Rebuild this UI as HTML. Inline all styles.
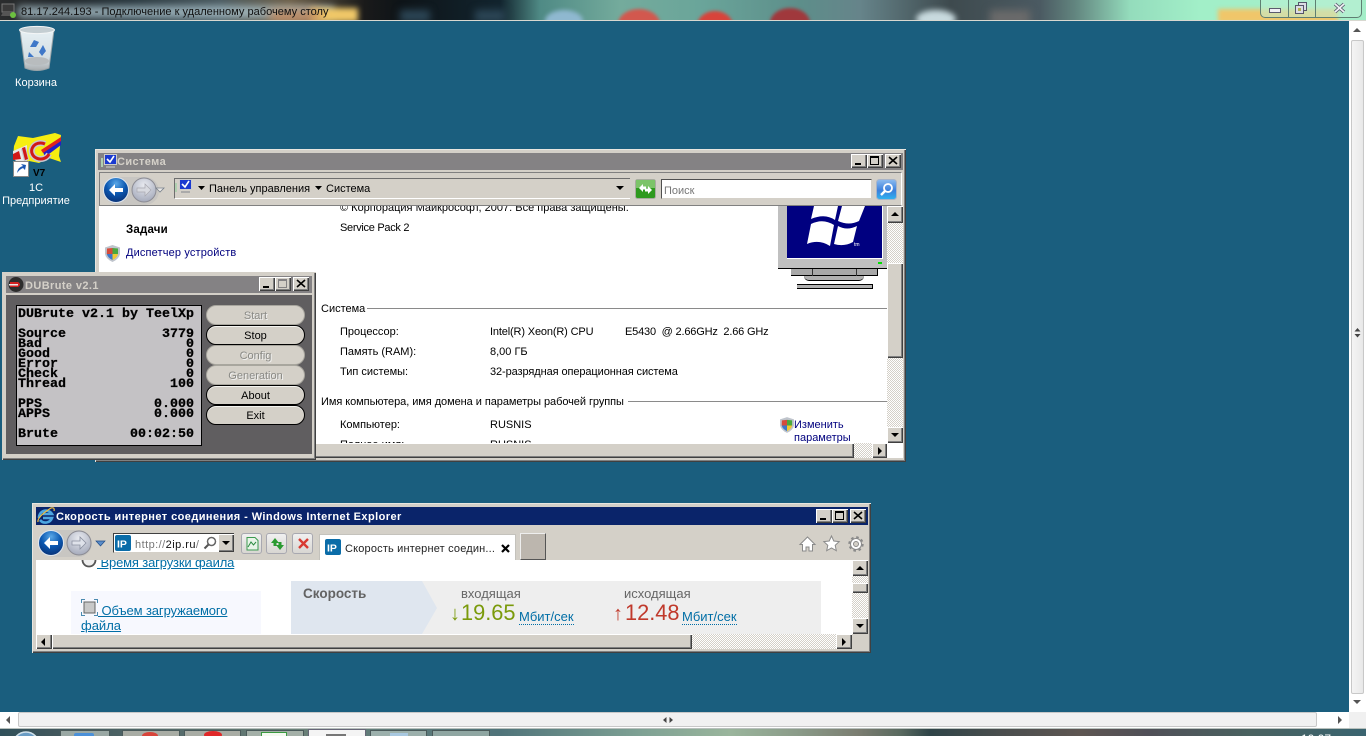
<!DOCTYPE html>
<html lang="ru"><head><meta charset="utf-8"><title>Remote desktop</title>
<style>
html,body{margin:0;padding:0;width:1366px;height:736px;overflow:hidden;background:#1a5e7e}
*{box-sizing:border-box}
body{font-family:"Liberation Sans","Noto Sans CJK SC",sans-serif;font-size:11px;color:#000;position:relative}
.a{position:absolute}
.t{position:absolute;white-space:nowrap;line-height:14px;font-size:11px}
.win{position:absolute;background:#d4d0c8;box-shadow:inset 1px 1px 0 #e8e6e0,inset -1px -1px 0 #404040,inset -2px -2px 0 #808080}
.b3{position:absolute;background:#d4d0c8;box-shadow:inset 1px 1px 0 #fff,inset -1px -1px 0 #404040,inset -2px -2px 0 #808080}
.dither{position:absolute;background-color:#f0eeea;background-image:repeating-conic-gradient(#d4d0c8 0 25%,#fff 0 50%);background-size:2px 2px}
.cap{font-weight:bold;font-size:11px;color:#d4d0c8;letter-spacing:.4px}
svg{position:absolute;display:block;overflow:visible}
a,.lnk{color:#006ea6;text-decoration:underline}
</style></head><body>

<!-- RDP top bar -->
<div class="a" style="left:0;top:0;width:1366px;height:20px;overflow:hidden;background:linear-gradient(90deg,#2b2d2e 0,#1c2226 60px,#28363d 130px,#4a5a60 220px,#6c5f48 290px,#1a1a1a 365px,#0e1418 400px,#12242e 500px,#4f8a85 540px,#74ab9c 620px,#6aa59a 700px,#5d8e8a 800px,#66848a 860px,#3e4a4e 950px,#4b5a62 1040px,#62857f 1075px,#94dcbc 1130px,#a2efc8 1200px,#a4eec8 1366px)">
 <div class="a" style="left:18px;top:6px;width:316px;height:12px;background:rgba(190,215,225,.7);filter:blur(4px)"></div>
 <div class="a" style="left:310px;top:8px;width:48px;height:14px;background:#f0c868;filter:blur(3px)"></div>
 <div class="a" style="left:270px;top:10px;width:50px;height:12px;background:#c08a60;filter:blur(5px)"></div>
 <div class="a" style="left:400px;top:10px;width:30px;height:12px;background:#2c4656;filter:blur(4px)"></div>
 <div class="a" style="left:475px;top:10px;width:30px;height:12px;background:#2c4656;filter:blur(4px)"></div>
 <div class="a" style="left:545px;top:10px;width:38px;height:22px;border-radius:50%;background:#8fb8d0;filter:blur(2px)"></div>
 <div class="a" style="left:618px;top:9px;width:42px;height:30px;border-radius:50%;background:#d2584e;filter:blur(1.5px)"></div>
 <div class="a" style="left:697px;top:11px;width:36px;height:30px;border-radius:50%;background:#d8433a;filter:blur(1.5px)"></div>
 <div class="a" style="left:770px;top:8px;width:40px;height:30px;border-radius:50%;background:#a0383c;filter:blur(1.5px)"></div>
 <div class="a" style="left:916px;top:10px;width:40px;height:18px;border-radius:50%;background:#c8dade;filter:blur(3px)"></div>
 <div class="a" style="left:990px;top:10px;width:40px;height:16px;background:#6a6a6a;filter:blur(4px)"></div>
 <div class="a" style="left:1218px;top:9px;width:120px;height:14px;background:#f0c66a;filter:blur(2px)"></div>
 <div class="a" style="left:1260px;top:0;width:102px;height:18px;background:rgba(190,240,215,.55);border:1px solid #5f7f72;border-top:0;border-radius:0 0 5px 5px"></div>
 <div class="a" style="left:1288px;top:0;width:1px;height:17px;background:#5f7f72"></div>
 <div class="a" style="left:1315px;top:0;width:1px;height:17px;background:#5f7f72"></div>
 <div class="a" style="left:1269px;top:8px;width:12px;height:5px;background:#f0f0f4;border:1px solid #5a5a6e"></div>
 <svg style="left:1295px;top:2px" width="12" height="12"><rect x="3.500" y=".5" width="8" height="8" fill="#dcdce4" stroke="#55556a"/><rect x=".5" y="3.500" width="8" height="8" fill="#dcdce4" stroke="#55556a"/><rect x="3" y="6" width="3" height="3" fill="#b0b050"/></svg>
 <svg style="left:1334px;top:3px" width="11" height="10"><path d="M1 1L10 9M10 1L1 9" stroke="#5a5a6e" stroke-width="3.400"/><path d="M1 1L10 9M10 1L1 9" stroke="#f0f0f4" stroke-width="1.800"/></svg>
</div>
<div class="a" style="left:0;top:20px;width:1366px;height:1px;background:#d8d8d0"></div>
<svg style="left:1px;top:3px" width="16" height="15"><rect x="1" y="1" width="12" height="8" fill="#3a3a3a" stroke="#777"/><path d="M2 9h10l2 4H0z" fill="#555"/><circle cx="12" cy="12" r="3" fill="#6cc040"/></svg>
<div class="t" style="left:21px;top:5px;font-size:11.05px;color:#101010">81.17.244.193 - Подключение к удаленному рабочему столу</div>

<!-- Desktop icons -->
<svg style="left:18px;top:25px" width="38" height="47" viewBox="0 0 38 47">
 <defs><linearGradient id="rb" x1="0" x2="0" y1="0" y2="1"><stop offset="0" stop-color="#e6f0f4"/><stop offset=".7" stop-color="#d4dee2"/><stop offset="1" stop-color="#a8acae"/></linearGradient></defs>
 <path d="M2 5L7 43Q19 48 31 43L36 5z" fill="url(#rb)" stroke="#9aa4a8"/><ellipse cx="19" cy="5" rx="17.500" ry="3.600" fill="#c4ced2" stroke="#f4f6f6"/>
 <path d="M12 22l4-7 5 2-3 5zM25 20l3 6-4 5-3-4zM11 27l5 5h-6z" fill="#3f78c8"/><ellipse cx="19" cy="36" rx="12" ry="4" fill="#b8bcbe"/>
</svg>
<div class="t" style="left:0;top:76px;width:72px;text-align:center;color:#fff">Корзина</div>

<svg style="left:13px;top:132px" width="50" height="46" viewBox="0 0 50 46">
 <path d="M5 4L20 6L42 1L48 3L47 14L46 24L48 30L36 26L26 31L16 29L8 31L0 26L1 14z" fill="#f6ee10"/>
 <path d="M0 19L14 13L14 30L4 30L0 26z" fill="#e8e8e8"/>
 <path d="M0 22L6 19L8 27L0 28z" fill="#d01818"/>
 <path d="M30 20L48 8L48 13L32 25z" fill="#2020c8"/>
 <path d="M28 18L48 5L48 9L30 21z" fill="#e02020"/>
 <path d="M8 17L13 15L16 28L11 29z" fill="#c8c8d0"/><path d="M9 16L12 15L15 27L12 28z" fill="#d01818"/>
 <path d="M32 12A9 8 0 1 0 36 22" fill="none" stroke="#c8c8d0" stroke-width="6"/>
 <path d="M32 12A9 8 0 1 0 36 22" fill="none" stroke="#d01818" stroke-width="3"/>
 <rect x=".5" y="29.500" width="15" height="15" fill="#fff" stroke="#888"/><path d="M4 41Q5 35 10 34L8 32L13 33L12 38L10 36Q7 37 4 41z" fill="#1c58b4"/>
</svg>
<div class="t" style="left:33px;top:167px;font-weight:bold;font-size:10px;color:#000">V7</div>
<div class="t" style="left:0;top:181px;width:72px;text-align:center;color:#fff">1C</div>
<div class="t" style="left:0;top:194px;width:72px;text-align:center;color:#fff">Предприятие</div>

<!-- System window -->
<div class="win" style="left:95px;top:149px;width:811px;height:313px;overflow:hidden">
 <div class="a" style="left:3px;top:4px;width:805px;height:17px;background:#848284"></div>
 <svg style="left:6px;top:5px" width="16" height="15"><rect x="0" y="4" width="2" height="9" fill="#b0d0b0"/><rect x="3.500" y=".5" width="12" height="10" fill="#1a3ad0" stroke="#ccc"/><path d="M6 5l3 3 4-6" stroke="#fff" stroke-width="1.600" fill="none"/><rect x="5" y="12" width="9" height="2" fill="#aaa"/></svg>
 <div class="t cap" style="left:22px;top:6px">Система</div>
 <div class="b3" style="left:756px;top:5px;width:16px;height:14px"><div class="a" style="left:4px;top:9px;width:6px;height:2px;background:#000"></div></div>
 <div class="b3" style="left:772px;top:5px;width:16px;height:14px"><div class="a" style="left:3px;top:2px;width:9px;height:9px;border:1px solid #000;border-top-width:2px"></div></div>
 <div class="b3" style="left:790px;top:5px;width:16px;height:14px"><svg style="left:4px;top:3px" width="8" height="7"><path d="M0 0L8 7M8 0L0 7" stroke="#000" stroke-width="1.600"/></svg></div>
 <div class="a" style="left:4px;top:23px;width:803px;height:34px;background:#d4d0c8;border-top:1px solid #808080;border-left:1px solid #808080;border-right:1px solid #fff;border-bottom:1px solid #808080"></div>
</div>

<div class="a" style="left:104px;top:177px;width:55px;height:28px;border-radius:14px;background:#c8c6c2"></div>
<svg style="left:102px;top:176px" width="70" height="28">
 <defs><radialGradient id="bb" cx=".5" cy=".25" r=".8"><stop offset="0" stop-color="#5aa8e8"/><stop offset=".5" stop-color="#0b57b0"/><stop offset="1" stop-color="#0a2e70"/></radialGradient>
 <radialGradient id="gb" cx=".5" cy=".3" r=".8"><stop offset="0" stop-color="#e8eaf0"/><stop offset="1" stop-color="#9ca2b4"/></radialGradient></defs>
 <circle cx="14" cy="14" r="12.500" fill="url(#bb)" stroke="#dfe6ee"/><path d="M7 14l6-6v4h8v4h-8v4z" fill="#fff"/>
 <circle cx="42" cy="14" r="12" fill="url(#gb)" stroke="#8c8c94"/><path d="M49 14l-6-6v4h-8v4h8v4z" fill="#d8dae0" stroke="#a8a8b0" stroke-width=".7"/>
 <path d="M54 12h8l-4 4z" fill="#ecebe8" stroke="#77808c" stroke-width=".8"/>
</svg>
<div class="a" style="left:174px;top:178px;width:456px;height:21px;background:#d4d0c8;border-top:1px solid #6e6e6e;border-left:1px solid #6e6e6e;border-bottom:1px solid #fff"></div>
<svg style="left:175px;top:179px" width="18" height="17"><rect x="0" y="4" width="2" height="9" fill="#b0d0b0"/><rect x="4.500" y=".5" width="12" height="10" fill="#1a3ad0" stroke="#ccc"/><path d="M7 5l3 3 4-6" stroke="#fff" stroke-width="1.600" fill="none"/><rect x="6" y="12" width="9" height="2" fill="#aaa"/></svg>
<svg style="left:198px;top:186px" width="8" height="5"><path d="M0 0h7L3.500 4z" fill="#000"/></svg>
<div class="t" style="left:209px;top:182px">Панель управления</div>
<svg style="left:315px;top:186px" width="8" height="5"><path d="M0 0h7L3.500 4z" fill="#000"/></svg>
<div class="t" style="left:326px;top:182px">Система</div>
<svg style="left:616px;top:186px" width="9" height="5"><path d="M0 0h8L4 4z" fill="#000"/></svg>
<svg style="left:635px;top:179px" width="21" height="20"><rect x=".5" y=".5" width="20" height="19" rx="2" fill="#2e9a1e" stroke="#a8aca0"/><rect x="1" y="1" width="19" height="8" fill="#7cc468"/><path d="M4 9l4-4v2.500h3v3H8V13zM17 11l-4 4v-2.500h-3v-3h3V7z" fill="#fff"/></svg>
<div class="a" style="left:661px;top:179px;width:211px;height:20px;background:#fff;border-top:1px solid #505050;border-left:1px solid #505050;border-right:1px solid #d4d0c8;border-bottom:1px solid #d4d0c8"></div>
<div class="t" style="left:664px;top:184px;color:#777">Поиск</div>
<svg style="left:876px;top:179px" width="21" height="21"><defs><linearGradient id="sb" x1="0" x2="0" y1="0" y2="1"><stop offset="0" stop-color="#8cbcf0"/><stop offset=".55" stop-color="#3a7fdc"/><stop offset="1" stop-color="#2fb4f0"/></linearGradient></defs><rect x=".5" y=".5" width="20" height="20" rx="3" fill="url(#sb)" stroke="#a8b4c8"/><circle cx="12" cy="9" r="4" fill="none" stroke="#fff" stroke-width="1.800"/><path d="M9 12l-4 4" stroke="#fff" stroke-width="2.400"/></svg>

<!-- System content -->
<div class="a" style="left:99px;top:206px;width:788px;height:237px;background:#fff;overflow:hidden">
 <div class="t" style="left:241px;top:-5px">© Корпорация Майкрософт, 2007. Все права защищены.</div>
 <div class="t" style="left:241px;top:15px;letter-spacing:-.3px">Service Pack 2</div>
 <div class="t" style="left:27px;top:17px;font-weight:bold;font-size:11.5px;letter-spacing:.2px">Задачи</div>
 <div class="t" style="left:27px;top:40px;color:#00007e;letter-spacing:.15px">Диспетчер устройств</div>
 <svg style="left:6px;top:39px" width="15" height="17" viewBox="0 0 15 17"><path d="M7.500 0L15 2.500V9Q14 14 7.500 17Q1 14 0 9V2.500z" fill="#bfc4cc"/><path d="M2 3.500L7.500 3V9H1.800z" fill="#d64a3a"/><path d="M7.500 3L13 3.500V9H7.500z" fill="#4aa83e"/><path d="M1.800 9H7.500V15Q3 13 1.800 9z" fill="#3d76c8"/><path d="M7.500 9H13Q12 13 7.500 15z" fill="#f0c832"/></svg>
 <!-- monitor -->
 <div class="a" style="left:679px;top:0;width:109px;height:63px;background:#c0c0c0;border-bottom:1px solid #000"></div>
 <div class="a" style="left:688px;top:0;width:96px;height:53px;background:#000080;border-right:1px solid #fff;border-bottom:1px solid #fff"></div>
 <div class="a" style="left:779px;top:56px;width:4px;height:2px;background:#00e000"></div>
 <svg style="left:708px;top:0" width="60" height="44" viewBox="0 0 60 44">
  <path d="M7 0L31 0L28 14Q18 7 4 13z M35 0L58 0L52 15Q42 20 31 15z" fill="#fff"/>
  <path d="M4 18Q16 12 27 19L23 40Q12 33 0 38z" fill="#fff"/>
  <path d="M31 20Q40 25 50 20L46 36Q37 41 27 38z" fill="#fff"/>
  <text x="47" y="40" font-size="5" fill="#fff" font-family="Liberation Sans">tm</text>
 </svg>
 <div class="a" style="left:692px;top:63px;width:87px;height:7px;background:#a8a8a8;border-bottom:1px solid #000;border-right:1px solid #000"></div>
 <div class="a" style="left:713px;top:63px;width:1px;height:7px;background:#333"></div>
 <div class="a" style="left:757px;top:63px;width:1px;height:7px;background:#333"></div>
 <div class="a" style="left:705px;top:70px;width:60px;height:5px;background:#b0b0b0;border-radius:0 0 22px 22px;border-bottom:1px solid #000"></div>
 <div class="a" style="left:698px;top:78px;width:76px;height:5px;background:#b0b0b0;border-top:1px solid #000;border-bottom:1px solid #000;border-right:1px solid #000"></div>
 <!-- sections -->
 <div class="t" style="left:222px;top:96px">Система</div>
 <div class="a" style="left:268px;top:102px;width:520px;height:1px;background:#8a8a8a"></div>
 <div class="t" style="left:241px;top:119px">Процессор:</div>
 <div class="t" style="left:391px;top:119px;letter-spacing:-.15px">Intel(R) Xeon(R) CPU</div>
 <div class="t" style="left:526px;top:119px;letter-spacing:-.18px">E5430&nbsp; @ 2.66GHz&nbsp; 2.66 GHz</div>
 <div class="t" style="left:241px;top:139px">Память (RAM):</div>
 <div class="t" style="left:391px;top:139px">8,00 ГБ</div>
 <div class="t" style="left:241px;top:159px">Тип системы:</div>
 <div class="t" style="left:391px;top:159px;letter-spacing:-.09px">32-разрядная операционная система</div>
 <div class="t" style="left:222px;top:189px;letter-spacing:-.06px">Имя компьютера, имя домена и параметры рабочей группы</div>
 <div class="a" style="left:529px;top:195px;width:259px;height:1px;background:#8a8a8a"></div>
 <div class="t" style="left:241px;top:212px">Компьютер:</div>
 <div class="t" style="left:391px;top:212px">RUSNIS</div>
 <svg style="left:681px;top:211px" width="14" height="16" viewBox="0 0 15 17"><path d="M7.500 0L15 2.500V9Q14 14 7.500 17Q1 14 0 9V2.500z" fill="#bfc4cc"/><path d="M2 3.500L7.500 3V9H1.800z" fill="#d64a3a"/><path d="M7.500 3L13 3.500V9H7.500z" fill="#4aa83e"/><path d="M1.800 9H7.500V15Q3 13 1.800 9z" fill="#3d76c8"/><path d="M7.500 9H13Q12 13 7.500 15z" fill="#f0c832"/></svg>
 <div class="t" style="left:695px;top:212px;color:#00007e">Изменить</div>
 <div class="t" style="left:695px;top:225px;color:#00007e">параметры</div>
 <div class="t" style="left:241px;top:232px">Полное имя:</div>
 <div class="t" style="left:391px;top:232px">RUSNIS</div>
</div>
<!-- system scrollbars -->
<div class="dither" style="left:887px;top:206px;width:16px;height:237px"></div>
<div class="b3" style="left:887px;top:206px;width:16px;height:17px"><svg style="left:4px;top:6px" width="8" height="5"><path d="M0 4h8L4 0z" fill="#000"/></svg></div>
<div class="b3" style="left:887px;top:263px;width:16px;height:95px"></div>
<div class="b3" style="left:887px;top:427px;width:16px;height:16px"><svg style="left:4px;top:6px" width="8" height="5"><path d="M0 0h8L4 4z" fill="#000"/></svg></div>
<div class="dither" style="left:99px;top:443px;width:788px;height:15px"></div>
<div class="b3" style="left:99px;top:443px;width:755px;height:15px"></div>
<div class="b3" style="left:872px;top:443px;width:15px;height:15px"><svg style="left:6px;top:4px" width="5" height="8"><path d="M0 0v8l4-4z" fill="#000"/></svg></div>
<div class="a" style="left:887px;top:443px;width:16px;height:15px;background:#fff"></div>

<!-- DUBrute window -->
<div class="win" style="left:2px;top:272px;width:314px;height:188px;box-shadow:inset 1px 1px 0 #d4d0c8,inset -1px -1px 0 #404040,inset -2px -2px 0 #808080"></div>
<div class="a" style="left:6px;top:276px;width:306px;height:17px;background:#848284"></div>
<svg style="left:8px;top:277px" width="16" height="15"><circle cx="8" cy="7.500" r="7.500" fill="#2c2c2c"/><path d="M2 5h8q4 2.500 0 5H2z" fill="#d02020"/><path d="M1 7h9v1.500H1z" fill="#e8e8e8"/></svg>
<div class="t cap" style="left:25px;top:279px">DUBrute v2.1</div>
<div class="b3" style="left:259px;top:277px;width:16px;height:14px"><div class="a" style="left:4px;top:9px;width:6px;height:2px;background:#000"></div></div>
<div class="b3" style="left:275px;top:277px;width:16px;height:14px"><div class="a" style="left:3px;top:2px;width:9px;height:9px;border:1px solid #848284;border-top-width:2px"></div></div>
<div class="b3" style="left:293px;top:277px;width:16px;height:14px"><svg style="left:4px;top:3px" width="8" height="7"><path d="M0 0L8 7M8 0L0 7" stroke="#000" stroke-width="1.600"/></svg></div>
<div class="a" style="left:6px;top:295px;width:306px;height:159px;background:#605e60"></div>
<div class="a" style="left:16px;top:305px;width:186px;height:141px;background:#c4c2c5;border:1px solid #000"></div>
<div id="mono" style="font-family:'Liberation Mono',monospace;font-weight:bold;font-size:13.33px;color:#000;-webkit-text-stroke:.25px #000">
 <div class="a" style="left:18px;top:308px;line-height:14px;white-space:pre">DUBrute v2.1 by TeelXp</div>
 <div class="a" style="left:18px;top:328px;line-height:14px;white-space:pre">Source            3779</div>
 <div class="a" style="left:18px;top:338px;line-height:14px;white-space:pre">Bad                  0</div>
 <div class="a" style="left:18px;top:348px;line-height:14px;white-space:pre">Good                 0</div>
 <div class="a" style="left:18px;top:358px;line-height:14px;white-space:pre">Error                0</div>
 <div class="a" style="left:18px;top:368px;line-height:14px;white-space:pre">Check                0</div>
 <div class="a" style="left:18px;top:378px;line-height:14px;white-space:pre">Thread             100</div>
 <div class="a" style="left:18px;top:398px;line-height:14px;white-space:pre">PPS              0.000</div>
 <div class="a" style="left:18px;top:408px;line-height:14px;white-space:pre">APPS             0.000</div>
 <div class="a" style="left:18px;top:428px;line-height:14px;white-space:pre">Brute         00:02:50</div>
</div>
<style>.rb{position:absolute;left:206px;width:99px;height:20px;border-radius:10px;background:#d4d0c8;text-align:center;line-height:20px;font-size:11px;border:1px solid #a8a69e;color:#8a8a86;text-shadow:1px 1px 0 #f0f0f0}.rb.on{border:1px solid #000;box-shadow:inset 0 1px 0 #f4f4f0;color:#000;text-shadow:none}</style>
<div class="rb" style="top:305px">Start</div>
<div class="rb on" style="top:325px">Stop</div>
<div class="rb" style="top:345px">Config</div>
<div class="rb" style="top:365px">Generation</div>
<div class="rb on" style="top:385px">About</div>
<div class="rb on" style="top:405px">Exit</div>

<!-- IE window -->
<div class="win" style="left:32px;top:503px;width:839px;height:150px"></div>
<div class="a" style="left:36px;top:507px;width:832px;height:18px;background:#0a246a"></div>
<svg style="left:37px;top:507px" width="18" height="18" viewBox="0 0 18 18"><path d="M2 11A7 7 0 0 1 15 7H6M6 11H15A7 7 0 0 1 3 13" fill="none" stroke="#4da6e0" stroke-width="2.600"/><path d="M1 15Q0 10 14 1Q18 0 17 4" fill="none" stroke="#f0c040" stroke-width="1.200"/></svg>
<div class="t" style="left:56px;top:510px;font-weight:bold;color:#fff;letter-spacing:.43px">Скорость интернет соединения - Windows Internet Explorer</div>
<div class="b3" style="left:816px;top:509px;width:16px;height:14px"><div class="a" style="left:4px;top:9px;width:6px;height:2px;background:#000"></div></div>
<div class="b3" style="left:832px;top:509px;width:16px;height:14px"><div class="a" style="left:3px;top:2px;width:9px;height:9px;border:1px solid #000;border-top-width:2px"></div></div>
<div class="b3" style="left:850px;top:509px;width:16px;height:14px"><svg style="left:4px;top:3px" width="8" height="7"><path d="M0 0L8 7M8 0L0 7" stroke="#000" stroke-width="1.600"/></svg></div>

<div class="a" style="left:40px;top:530px;width:52px;height:27px;border-radius:14px;background:#c8c6c2"></div>
<svg style="left:38px;top:530px" width="72" height="28">
 <circle cx="13" cy="13" r="12.500" fill="url(#bb)" stroke="#dfe6ee"/><path d="M6 13l6-6v4h8v4h-8v4z" fill="#fff"/>
 <circle cx="41" cy="13" r="12" fill="url(#gb)" stroke="#8c8c94"/><path d="M48 13l-6-6v4h-8v4h8v4z" fill="#dfe2ea" stroke="#8a90a0" stroke-width=".8"/>
 <path d="M58 11h9l-4.500 5z" fill="#5a8cc8" stroke="#1f4c88" stroke-width=".7"/>
</svg>
<div class="a" style="left:113px;top:533px;width:121px;height:20px;background:#fff;border-top:1px solid #404040;border-left:1px solid #404040;border-bottom:1px solid #d4d0c8"></div>
<svg style="left:115px;top:535px" width="16" height="16"><rect width="16" height="16" rx="2" fill="#0a6ca8"/><text x="2" y="12.500" font-size="10.500" font-weight="bold" fill="#fff" font-family="Liberation Sans">IP</text></svg>
<div class="t" style="left:135px;top:538px;color:#777;width:65px;overflow:hidden;letter-spacing:.45px">http://<span style="color:#111">2ip.ru</span>/</div>
<svg style="left:203px;top:536px" width="14" height="14"><circle cx="8.500" cy="5.500" r="4" fill="#fff" stroke="#666" stroke-width="1.500"/><path d="M5.500 8.500L1.500 12.500" stroke="#555" stroke-width="2"/></svg>
<div class="b3" style="left:218px;top:534px;width:16px;height:18px"><svg style="left:4px;top:7px" width="8" height="5"><path d="M0 0h8L4 4z" fill="#000"/></svg></div>
<style>.tb{position:absolute;top:533px;width:21px;height:21px;border:1px solid #a8a8b0;border-radius:3px;background:linear-gradient(#f0f0f0,#d8d6d2)}</style>
<div class="tb" style="left:241px"><svg style="left:4px;top:3px" width="13" height="14"><path d="M1 .500h8l3 3V13H1z" fill="#e8f4e8" stroke="#3c9a50"/><path d="M2 10l3-5 2.500 3L10 5" fill="none" stroke="#2a8a40"/></svg></div>
<div class="tb" style="left:266px"><svg style="left:3px;top:3px" width="15" height="14"><path d="M1 6l4-5 4 5H6.500v3H3.500V6z" fill="#2a9a30"/><path d="M14 8l-4 5-4-5h2.500V5h3v3z" fill="#2a9a30"/></svg></div>
<div class="tb" style="left:292px"><svg style="left:5px;top:4px" width="11" height="11"><path d="M1 1L10 10M10 1L1 10" stroke="#d83a32" stroke-width="2.400"/></svg></div>
<div class="a" style="left:319px;top:534px;width:197px;height:26px;background:#fff;border:1px solid #c4c2bc;border-bottom:0"></div>
<svg style="left:325px;top:539px" width="16" height="16"><rect width="16" height="16" rx="2" fill="#0a6ca8"/><text x="2" y="12.500" font-size="10.500" font-weight="bold" fill="#fff" font-family="Liberation Sans">IP</text></svg>
<div class="t" style="left:345px;top:542px;color:#222;letter-spacing:.18px">Скорость интернет соедин...</div>
<svg style="left:501px;top:544px" width="9" height="9"><path d="M1 1L8 8M8 1L1 8" stroke="#000" stroke-width="2.200"/></svg>
<div class="a" style="left:520px;top:533px;width:26px;height:27px;background:#bcb6ae;border:1px solid #555;border-left-color:#eee;border-top-color:#eee"></div>
<svg style="left:799px;top:535px" width="18" height="18"><path d="M8.500 2L16 9.500h-2.500V16H10v-4H7v4H3.500V9.500H1z" fill="#fff" stroke="#8a8a8a"/></svg>
<svg style="left:823px;top:535px" width="17" height="17"><path d="M8.500 1l2.300 5 5.400.600-4 3.700 1.100 5.400-4.800-2.700-4.800 2.700 1.100-5.400-4-3.700 5.400-.600z" fill="#fff" stroke="#8a8a8a"/></svg>
<svg style="left:848px;top:536px" width="16" height="16"><circle cx="8" cy="8" r="5.500" fill="#fff" stroke="#8a8a8a" stroke-width="1"/><circle cx="8" cy="8" r="6.500" fill="none" stroke="#8a8a8a" stroke-width="2.400" stroke-dasharray="2.500 2.600"/><circle cx="8" cy="8" r="2.500" fill="#d4d0c8" stroke="#8a8a8a"/></svg>

<!-- IE content -->
<div class="a" style="left:36px;top:560px;width:816px;height:74px;background:#fff;overflow:hidden">
 <svg style="left:45px;top:-6px" width="16" height="14"><circle cx="8" cy="6" r="6.500" fill="#eee" stroke="#555" stroke-width="1.800"/></svg>
 <div class="t lnk" style="left:61px;top:-5px;font-size:13px;line-height:15px;letter-spacing:-.15px">&nbsp;Время загрузки файла</div>
 <div class="a" style="left:35px;top:31px;width:190px;height:43px;background:#f7f8fe"></div>
 <svg style="left:45px;top:39px" width="17" height="17"><path d="M.500 4V.500H4M13 .500h3.500V4M16.500 13v3.500H13M4 16.500H.500V13" fill="none" stroke="#4a8ab0"/><rect x="3" y="3" width="11" height="11" fill="#c8c8c8" stroke="#666"/></svg>
 <div class="t lnk" style="left:62px;top:43px;font-size:13px;line-height:15px;letter-spacing:-.1px">&nbsp;Объем загружаемого</div>
 <div class="t lnk" style="left:45px;top:58px;font-size:13px;line-height:15px">файла</div>
 <div class="a" style="left:255px;top:21px;width:530px;height:53px;background:#eeeeee"></div>
 <svg style="left:255px;top:21px" width="147" height="53"><path d="M0 0H131L146 27L131 53H0z" fill="#dfe6ef"/></svg>
 <div class="t" style="left:267px;top:27px;font-size:13.5px;font-weight:bold;color:#636363">Скорость</div>
 <div class="t" style="left:425px;top:27px;font-size:13px;color:#666">входящая</div>
 <div class="t" style="left:414px;top:42px;font-size:20px;line-height:24px;color:#7a9a0a">↓</div>
 <div class="t" style="left:425px;top:39px;font-size:21.800px;line-height:28px;color:#7a9a0a">19.65</div>
 <div class="t" style="left:483px;top:49px;font-size:13px;line-height:15px;color:#006ea6;border-bottom:1px dotted #006ea6">Мбит/сек</div>
 <div class="t" style="left:588px;top:27px;font-size:13px;color:#666">исходящая</div>
 <div class="t" style="left:577px;top:42px;font-size:20px;line-height:24px;color:#c0392b">↑</div>
 <div class="t" style="left:589px;top:39px;font-size:21.800px;line-height:28px;color:#c0392b">12.48</div>
 <div class="t" style="left:646px;top:49px;font-size:13px;line-height:15px;color:#006ea6;border-bottom:1px dotted #006ea6">Мбит/сек</div>
</div>
<div class="dither" style="left:852px;top:560px;width:16px;height:74px"></div>
<div class="b3" style="left:852px;top:560px;width:16px;height:16px"><svg style="left:4px;top:6px" width="8" height="5"><path d="M0 4h8L4 0z" fill="#000"/></svg></div>
<div class="b3" style="left:852px;top:583px;width:16px;height:10px"></div>
<div class="b3" style="left:852px;top:618px;width:16px;height:16px"><svg style="left:4px;top:6px" width="8" height="5"><path d="M0 0h8L4 4z" fill="#000"/></svg></div>
<div class="dither" style="left:36px;top:634px;width:816px;height:15px"></div>
<div class="b3" style="left:36px;top:634px;width:16px;height:15px"><svg style="left:5px;top:4px" width="5" height="8"><path d="M4 0v8L0 4z" fill="#000"/></svg></div>
<div class="b3" style="left:52px;top:634px;width:640px;height:15px"></div>
<div class="b3" style="left:836px;top:634px;width:16px;height:15px"><svg style="left:6px;top:4px" width="5" height="8"><path d="M0 0v8l4-4z" fill="#000"/></svg></div>

<!-- Outer RDP scrollbars -->
<div class="a" style="left:1349px;top:21px;width:17px;height:691px;background:#fff"></div>
<svg style="left:1353px;top:28px" width="9" height="5"><path d="M0 4h8L4 0z" fill="#555"/></svg>
<div class="a" style="left:1351px;top:40px;width:13px;height:654px;border:1px solid #c8c8c8;border-radius:2px;background:linear-gradient(90deg,#f4f4f4,#e8e8e8)"></div>
<svg style="left:1354px;top:328px" width="7" height="10"><path d="M3.500 0L6.500 3.500H.5zM3.500 9.500L6.500 6H.5z" fill="#444"/></svg>
<svg style="left:1353px;top:700px" width="9" height="5"><path d="M0 0h8L4 4z" fill="#555"/></svg>
<div class="a" style="left:0;top:712px;width:1349px;height:16px;background:#fff"></div>
<svg style="left:6px;top:716px" width="5" height="8"><path d="M4 0v8L0 4z" fill="#555"/></svg>
<div class="a" style="left:18px;top:712px;width:1299px;height:15px;border:1px solid #c8c8c8;border-radius:2px;background:#f1f1f1"></div>
<svg style="left:663px;top:717px" width="10" height="6"><path d="M3.500 0v6L0 3zM6.500 0v6L10 3z" fill="#444"/></svg>
<svg style="left:1338px;top:716px" width="5" height="8"><path d="M0 0v8l4-4z" fill="#555"/></svg>
<div class="a" style="left:1349px;top:712px;width:17px;height:16px;background:#f0f0f0"></div>

<!-- Taskbar -->
<div class="a" style="left:0;top:728px;width:1366px;height:8px;overflow:hidden;background:linear-gradient(90deg,#30505a 0,#40565c 50px,#6a8078 300px,#50747a 500px,#7ea194 640px,#9ab59c 730px,#8a9a88 800px,#7a7c70 860px,#5a6a60 900px,#2f4448 930px,#4a4e4e 1000px,#5e5652 1080px,#505058 1150px,#4a6260 1250px,#3a6470 1366px);border-top:1px solid #b8c0bc">
 <svg style="left:12px;top:2px" width="28" height="14"><circle cx="14" cy="14" r="13" fill="#6a9cc4" stroke="#cfe0ea" stroke-width="1.500"/></svg>
 <div class="a" style="left:60px;top:1px;width:50px;height:9px;background:#9aa8a4;border:1px solid #4a5a5a"></div>
 <div class="a" style="left:122px;top:1px;width:58px;height:9px;background:#a8aca4;border:1px solid #4a5a5a"></div>
 <div class="a" style="left:184px;top:1px;width:57px;height:9px;background:#a8aca4;border:1px solid #4a5a5a"></div>
 <div class="a" style="left:246px;top:1px;width:58px;height:9px;background:#a4b0a8;border:1px solid #4a5a5a"></div>
 <div class="a" style="left:308px;top:0;width:58px;height:9px;background:#f4f4f4;border:1px solid #667"></div>
 <div class="a" style="left:370px;top:1px;width:57px;height:9px;background:#9cb0ac;border:1px solid #4a5a5a"></div>
 <div class="a" style="left:432px;top:1px;width:58px;height:9px;background:#8fa6a2;border:1px solid #4a5a5a"></div>
 <div class="a" style="left:74px;top:4px;width:20px;height:6px;background:#4a90d8;border-radius:2px"></div>
 <div class="a" style="left:142px;top:3px;width:16px;height:8px;background:#d8443a;border-radius:50%"></div>
 <div class="a" style="left:204px;top:2px;width:18px;height:8px;background:#e02828;border-radius:50%"></div>
 <div class="a" style="left:261px;top:3px;width:26px;height:8px;background:#f4f8f0;border:1px solid #3a9a40"></div>
 <div class="a" style="left:326px;top:5px;width:20px;height:6px;background:#777"></div>
 <div class="a" style="left:390px;top:4px;width:18px;height:6px;background:#a8c8e0"></div>
 <div class="t" style="left:1296px;top:3px;width:40px;text-align:center;color:#fff;font-size:12px;line-height:14px">10:07</div>
</div>
</body></html>
